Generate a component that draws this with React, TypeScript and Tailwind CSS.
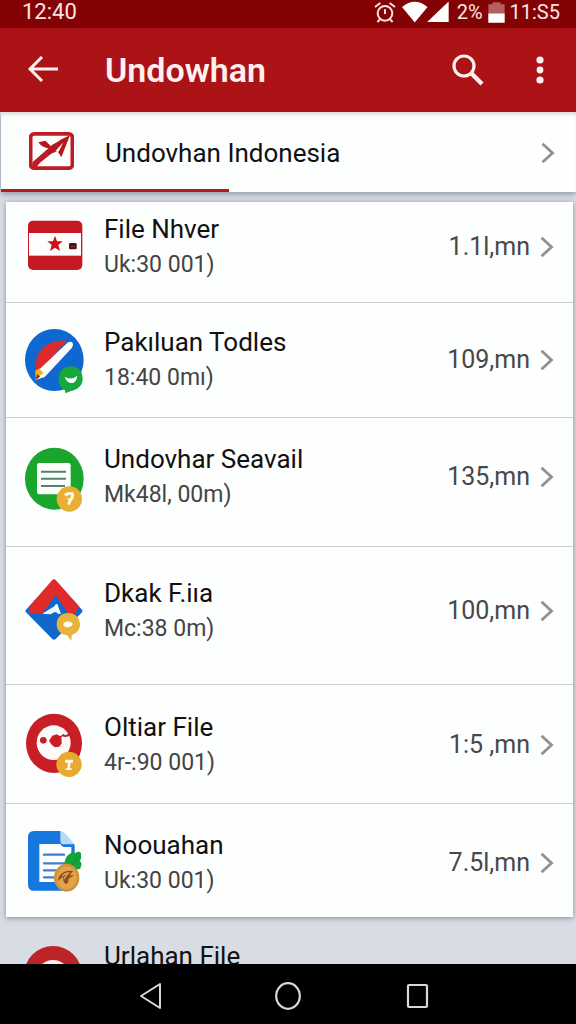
import type { ReactNode } from "react";

function Chevron() {
  return (
    <svg viewBox="0 0 14 22" className="h-[22px] w-[14px] shrink-0" fill="none" stroke="#919193" strokeWidth="2.8" aria-hidden="true">
      <path d="M1.5 1.8 11.5 11 1.5 20.2" />
    </svg>
  );
}

function IconFrame({ viewBox, children }: { viewBox: string; children: ReactNode }) {
  return (
    <svg viewBox={viewBox} className="h-16 w-[62px] shrink-0 overflow-visible" aria-hidden="true">
      {children}
    </svg>
  );
}

const flagIcon = (
  <IconFrame viewBox="72 75 186 192">
    <rect x="84" y="92" width="163" height="148" rx="15" fill="#c41b22" />
    <rect x="87" y="129" width="156" height="68" fill="#fdfdfd" />
    <path d="m165 137 6 17h17l-13 11 5 18-15-10-15 10 5-18-13-11h17z" fill="#cf1118" />
    <rect x="207" y="159" width="23" height="19" rx="4" fill="#4a1518" />
    <path d="M212 170h12" stroke="#a03035" strokeWidth="3" />
  </IconFrame>
);

const penIcon = (
  <IconFrame viewBox="72 414 186 192">
    <ellipse cx="163" cy="510" rx="88" ry="93" fill="#0f68cf" />
    <path d="M107 540c-5-55 32-92 93-88l-80 92z" fill="#dc2a2e" />
    <path d="M106 570 120 536 204 457q9-5 14 2 3 7-2 14l-82 88z" fill="#fcfcfc" />
    <path d="M106 542l12-7 8 10 5 2-12 12-12 12z" fill="#eeb32c" />
    <path d="m106 570 6-18 8 8z" fill="#8e2a16" />
    <path d="M213 529c22 0 35 16 35 37 0 22-16 32-35 37l-17 7-1-9c-13-6-19-19-19-34 0-23 15-38 37-38z" fill="#16a83c" />
    <path d="M194 560q20 13 38-3-3 23-19 22-14-2-19-19z" fill="#fff" />
  </IconFrame>
);

const notesIcon = (
  <IconFrame viewBox="72 102 186 192">
    <ellipse cx="163" cy="203" rx="88" ry="93" fill="#1aa62b" />
    <rect x="111" y="156" width="101" height="94" rx="7" fill="#fcfffb" />
    <path d="M123 182h75M123 203h75M123 225h72" stroke="#56826a" strokeWidth="6" />
    <ellipse cx="208" cy="264" rx="38" ry="38" fill="#e8ae35" />
    <path d="M195 253q8-8 22-5 2 12-5 18-5 7-6 15" fill="none" stroke="#fff9df" strokeWidth="9" />
    <path d="M202 264h14" stroke="#fff9df" strokeWidth="4" />
  </IconFrame>
);

const diamondIcon = (
  <IconFrame viewBox="72 504 186 192">
    <path d="m78 596 84-91 84 91q3 4 0 8l-79 80q-5 4-10 0l-79-80q-4-4 0-8z" fill="#1167cc" />
    <path d="m88 606-1-19 70-80q5-5 10 0l70 79-11 20-22 1-37-55-39 55z" fill="#df2b29" />
    <path d="m127 608 43-27 13 27-19-5-12 7z" fill="#eaf7ff" />
    <path d="m164 582 8-3 10 29h-9z" fill="#fff" />
    <path d="M205 606c22 0 35 15 35 34 0 18-11 28-25 32l-1 18-12-17c-19-2-32-14-32-33 0-20 14-34 35-34z" fill="#e7b33a" />
    <path d="M192 636q8-7 19-4 11 5 4 12-11 9-20 3-8-5-3-11z" fill="#fffdf0" />
  </IconFrame>
);

const ringIcon = (
  <IconFrame viewBox="72 99 186 192">
    <ellipse cx="162" cy="190" rx="84" ry="89" fill="#c81e25" />
    <ellipse cx="161" cy="188" rx="51" ry="52" fill="#fffafa" />
    <circle cx="130" cy="181" r="10" fill="#c81e25" />
    <path d="M147 182 157 167 170 163 184 170 185 190 178 200 164 202 155 194z" fill="#c81e25" />
    <path d="M188 162 197 166 209 158 209 168 198 171 190 170z" fill="#b82626" />
    <path d="M179 172 192 164" stroke="#c81e25" strokeWidth="4" fill="none" />
    <ellipse cx="207" cy="253" rx="38" ry="38" fill="#e7a92e" />
    <path d="M195 239h24v9h-7l-2 17h5v5h-18v-5h5l2-17h-9z" fill="#fff9e6" />
  </IconFrame>
);

const documentIcon = (
  <IconFrame viewBox="72 453 186 192">
    <path d="M102 453h79l43 41v120q0 18-18 18h-104q-18 0-18-18V471q0-18 18-18z" fill="#1678df" />
    <path d="M181 453q10 1 19 12l24 28h-32q-11 0-11-11z" fill="#b8d8f6" />
    <path d="M118 492h64q2 9 12 9h20v105h-96z" fill="#fbfdff" />
    <path d="M132 524h60M132 550h62M132 571h36M132 592h30" stroke="#427fc3" strokeWidth="7" strokeLinecap="round" />
    <path d="M194 546q3-18 15-24 4-5 12-7 3 8 8 2 9-4 14 3 2 14-3 23l5 8-4 15-17 4-22-9q-13-4-8-15z" fill="#13a33b" />
    <path d="m210 562 26-30" stroke="#0b8c2e" strokeWidth="3" />
    <ellipse cx="200" cy="593" rx="38" ry="42" fill="#d49237" />
    <ellipse cx="200" cy="593" rx="30" ry="34" fill="#e0a54c" />
    <path d="M178 588q15-20 42-15-8 7-12 14 15-4 12 0-9 5-15 10 2 12-8 16-9-8-8-22-8 2-13 13-4-7 2-16z" fill="#8f4f16" />
    <path d="M187 588q10-10 18-9-9 8-13 18" fill="none" stroke="#e5ad55" strokeWidth="4" />
  </IconFrame>
);

const files = [
  { title: "File Nhver", detail: "Uk:30 001)", amount: "1.1l,mn", icon: flagIcon, pad: "pt-[9px] pb-[19px]" },
  { title: "Pakıluan Todles", detail: "18:40 0mı)", amount: "109,mn", icon: penIcon, pad: "pt-[21px] pb-[21px]" },
  { title: "Undovhar Seavail", detail: "Mk48l, 00m)", amount: "135,mn", icon: notesIcon, pad: "pt-[23px] pb-[33px]" },
  { title: "Dkak F.iıa", detail: "Mc:38 0m)", amount: "100,mn", icon: diamondIcon, pad: "pt-[28px] pb-[37px]" },
  { title: "Oltiar File", detail: "4r-:90 001)", amount: "1:5 ,mn", icon: ringIcon, pad: "pt-[24px] pb-[22px]" },
  { title: "Noouahan", detail: "Uk:30 001)", amount: "7.5l,mn", icon: documentIcon, pad: "pt-[23px] pb-[18px]" },
];

function StatusBar() {
  return (
    <div className="flex h-7 shrink-0 items-center justify-between bg-[#830304] pr-4 pl-[22px] pb-1 text-[22px] leading-6 text-[#fbe4e4]">
      <span>12:40</span>
      <div className="flex items-center text-[20px]">
        <svg viewBox="258 0 66 64" className="mr-[6px] h-[22px] w-[22px]" fill="none" stroke="#fbe4e4" strokeWidth="6" aria-hidden="true">
          <circle cx="291" cy="36" r="22" />
          <path d="m261 17 16-12M321 17 305 5M291 24v14M276 54l-8 8M306 54l8 8" />
        </svg>
        <svg viewBox="344 0 140 64" className="mr-2 h-[22px] w-[47px]" fill="#fff" aria-hidden="true">
          <path d="M344 17q38-31 76 0l-38 46zM419 62 483 1v61z" />
        </svg>
        <span>2%</span>
        <svg viewBox="612 0 50 62" className="mx-[5px] h-[21px] w-[17px]" aria-hidden="true">
          <path d="M625 1h24v6h12v54h-48V7h12z" fill="#b55f60" />
          <path d="M613 34h48v27h-48z" fill="#fff" />
        </svg>
        <span>11:S5</span>
      </div>
    </div>
  );
}

export default function App() {
  return (
    <div className="flex h-screen flex-col overflow-hidden bg-[#d8dce3] font-['Roboto','Liberation_Sans',sans-serif]">
      <StatusBar />
      <header className="flex h-[84px] shrink-0 items-center bg-[#ab1316] pr-8 pl-[27px] text-[#fff0f0]">
        <button aria-label="Back" className="mr-[46px]">
          <svg viewBox="0 0 32 28" className="h-7 w-8" fill="none" stroke="currentColor" strokeWidth="3" aria-hidden="true">
            <path d="M31 13H3M15 1 3 13l12 12" />
          </svg>
        </button>
        <h1 className="flex-1 text-[34px] leading-10 font-semibold">Undowhan</h1>
        <button aria-label="Search" className="mr-[52px]">
          <svg viewBox="0 0 32 32" className="h-8 w-8" fill="none" stroke="currentColor" aria-hidden="true">
            <circle cx="12" cy="12" r="10" strokeWidth="3.2" />
            <path d="m18.5 18.5 11.5 11.5" strokeWidth="4.4" />
          </svg>
        </button>
        <button aria-label="More options">
          <svg viewBox="0 0 8 28" className="h-7 w-2" fill="currentColor" aria-hidden="true">
            <circle cx="4" cy="4" r="3.6" />
            <circle cx="4" cy="14" r="3.4" />
            <circle cx="4" cy="24" r="3.6" />
          </svg>
        </button>
      </header>

      <main className="flex min-h-0 flex-1 flex-col overflow-hidden">
        <a href="#indonesia" className="relative z-10 ml-px flex h-20 shrink-0 flex-col bg-[#fdfefe] shadow-[0_2px_6px_#8c95a5,inset_0_4px_4px_-2px_#d5d5d8]">
          <span className="flex flex-1 items-center pt-1 pr-[21px] pl-7">
            <svg viewBox="87 395 135 113" className="mr-[31px] mb-[3px] h-[38px] w-[45px]" fill="none" aria-hidden="true">
              <rect x="92" y="400" width="125" height="103" rx="10" stroke="#bd1c22" strokeWidth="11" />
              <path d="m97 485 62-54 47-22-32 34-54 44-12 14H97z" fill="#bd1c22" />
              <path d="m115 425 21-4 18 17 30-22 26-12-26 66-11-18-28 10 3-18q-22-3-33-19z" fill="#b7161c" />
              <path d="m166 452 24-27-14 29z" fill="#fff" />
            </svg>
            <span className="flex-1 text-[26px] leading-9 text-[#111]">Undovhan Indonesia</span>
            <Chevron />
          </span>
          <span className="h-[3px] w-[228px] bg-[#b5171c]" />
        </a>

        <ul className="mt-[10px] mr-[3px] ml-[6px] shrink-0 bg-[#fdfefe] shadow-[0_1px_5px_#7f8b9b]">
          {files.map((file) => (
            <li key={file.amount} className="border-b border-[#cdcfd2] last:border-b-0">
              <a href="#file" className={`flex items-center pr-[19px] pl-[18px] ${file.pad}`}>
                {file.icon}
                <span className="ml-[18px] flex flex-1 flex-col leading-9">
                  <span className="text-[26px] text-[#111]">{file.title}</span>
                  <span className="text-[23px] text-[#444]">{file.detail}</span>
                </span>
                <span className="mr-[10px] text-[25px] leading-9 whitespace-pre text-[#484848]">{file.amount}</span>
                <Chevron />
              </a>
            </li>
          ))}
        </ul>

        <a href="#file" className="flex shrink-0 items-start pt-[21px] pr-[22px] pl-6">
          <svg viewBox="0 0 60 60" className="mt-[7px] h-[60px] w-[60px] shrink-0" aria-hidden="true">
            <circle cx="29" cy="30" r="29" fill="#bd2428" />
            <circle cx="29" cy="32" r="17" fill="#f7eef0" />
          </svg>
          <span className="ml-5 flex-1 text-[26px] leading-9 text-[#111]">Urlahan File</span>
          <span className="mt-4 flex items-center gap-[10px] pt-[6px] text-[25px] leading-9 text-[#484848]">
            1.5l,mn
            <Chevron />
          </span>
        </a>
      </main>

      <nav className="grid h-[60px] shrink-0 grid-cols-[1fr_auto_1fr] items-center bg-black pt-1 text-[#d8d8d8]">
        <button aria-label="Back" className="mr-28 justify-self-end">
          <svg viewBox="0 0 24 28" className="h-7 w-6" fill="none" stroke="currentColor" strokeWidth="2" strokeLinejoin="round" aria-hidden="true">
            <path d="M22 2v24L3 14z" />
          </svg>
        </button>
        <button aria-label="Home">
          <svg viewBox="0 0 28 28" className="h-7 w-7" fill="none" stroke="currentColor" strokeWidth="2.2" aria-hidden="true">
            <ellipse cx="14" cy="14" rx="11.8" ry="12.8" />
          </svg>
        </button>
        <button aria-label="Recent apps" className="ml-[104px] justify-self-start">
          <svg viewBox="0 0 24 28" className="h-7 w-6" fill="none" stroke="currentColor" strokeWidth="2.2" aria-hidden="true">
            <rect x="2" y="3" width="19" height="22" rx="1" />
          </svg>
        </button>
      </nav>
    </div>
  );
}
